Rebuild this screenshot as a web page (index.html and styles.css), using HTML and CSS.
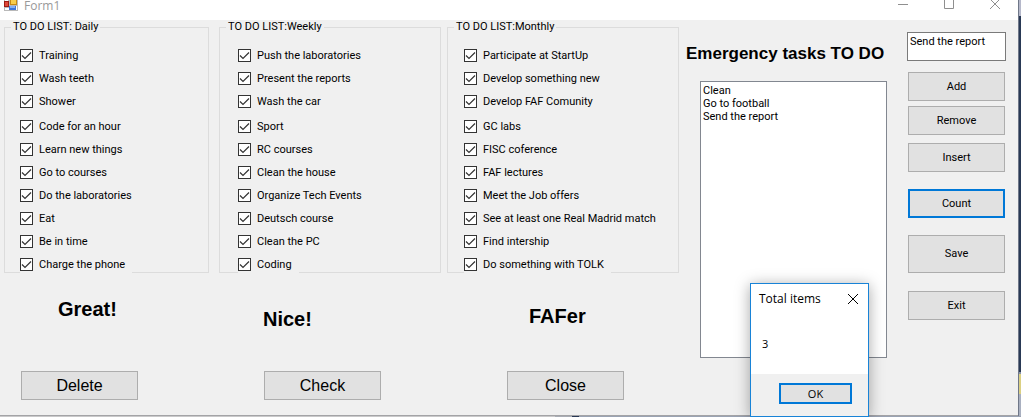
FILE: index.html
```
<!DOCTYPE html>
<html lang="en">
<head>
<meta charset="utf-8">
<title>Form1</title>
<link rel="stylesheet" href="styles.css">
</head>
<body>
<div class="desktop">
<div class="window">
  <header class="titlebar">
    <svg class="app-icon" width="14" height="11" viewBox="0 0 14 11" aria-hidden="true">
      <path d="M0 0h14v11H0z" fill="#b9b9b9"/>
      <path d="M1 0h3v1H1zM1 8h4v2H1zM12 6h1v4h-1z" fill="#fff"/>
      <path d="M0 1h5v6H0z" fill="#9c1c14"/>
      <path d="M1 2h3v4H1z" fill="#e0483a"/>
      <path d="M6 0h7v5H6z" fill="#c98a10"/>
      <path d="M7 0h5v4H7z" fill="#f8cd4a"/>
      <path d="M5 6h7v4H5z" fill="#3d76d8"/>
      <path d="M6 6h5v2H6z" fill="#86b0f4"/>
    </svg>
    <span class="title">Form1</span>
    <div class="controls">
      <button class="control" type="button" aria-label="Minimize"><svg width="10" height="10" viewBox="0 0 10 10"><path d="M0 4.5h10"/></svg></button>
      <button class="control" type="button" aria-label="Maximize"><svg width="10" height="10" viewBox="0 0 10 10"><path d="M.5-.5h9v9h-9z"/></svg></button>
      <button class="control" type="button" aria-label="Close window"><svg width="10" height="10" viewBox="0 0 10 10"><path d="M0-1l10 10M10-1L0 9"/></svg></button>
    </div>
  </header>

  <main class="form">
    <section class="column daily">
      <fieldset class="group">
        <legend>TO DO LIST: Daily</legend>
        <div class="tasks">
          <label><input type="checkbox" checked>Training</label>
          <label><input type="checkbox" checked>Wash teeth</label>
          <label><input type="checkbox" checked>Shower</label>
          <label class="next-part"><input type="checkbox" checked>Code for an hour</label>
          <label><input type="checkbox" checked>Learn new things</label>
          <label><input type="checkbox" checked>Go to courses</label>
          <label><input type="checkbox" checked>Do the laboratories</label>
          <label><input type="checkbox" checked>Eat</label>
          <label><input type="checkbox" checked>Be in time</label>
          <label><input type="checkbox" checked>Charge the phone</label>
        </div>
      </fieldset>
      <p class="praise">Great!</p>
      <button class="btn large" type="button">Delete</button>
    </section>

    <section class="column weekly">
      <fieldset class="group">
        <legend>TO DO LIST:Weekly</legend>
        <div class="tasks">
          <label><input type="checkbox" checked>Push the laboratories</label>
          <label><input type="checkbox" checked>Present the reports</label>
          <label><input type="checkbox" checked>Wash the car</label>
          <label class="next-part"><input type="checkbox" checked>Sport</label>
          <label><input type="checkbox" checked>RC courses</label>
          <label><input type="checkbox" checked>Clean the house</label>
          <label><input type="checkbox" checked>Organize Tech Events</label>
          <label><input type="checkbox" checked>Deutsch course</label>
          <label><input type="checkbox" checked>Clean the PC</label>
          <label><input type="checkbox" checked>Coding</label>
        </div>
      </fieldset>
      <p class="praise">Nice!</p>
      <button class="btn large" type="button">Check</button>
    </section>

    <section class="column monthly">
      <fieldset class="group">
        <legend>TO DO LIST:Monthly</legend>
        <div class="tasks">
          <label><input type="checkbox" checked>Participate at StartUp</label>
          <label><input type="checkbox" checked>Develop something new</label>
          <label><input type="checkbox" checked>Develop FAF Comunity</label>
          <label class="next-part"><input type="checkbox" checked>GC labs</label>
          <label><input type="checkbox" checked>FISC coference</label>
          <label><input type="checkbox" checked>FAF lectures</label>
          <label><input type="checkbox" checked>Meet the Job offers</label>
          <label><input type="checkbox" checked>See at least one Real Madrid match</label>
          <label><input type="checkbox" checked>Find intership</label>
          <label><input type="checkbox" checked>Do something with TOLK</label>
        </div>
      </fieldset>
      <p class="praise">FAFer</p>
      <button class="btn large" type="button">Close</button>
    </section>

    <section class="column emergency">
      <label class="heading" for="emergency-list">Emergency tasks TO DO</label>
      <select class="listbox" id="emergency-list" size="20">
        <option>Clean</option>
        <option>Go to football</option>
        <option>Send the report</option>
      </select>
    </section>

    <section class="column actions">
      <textarea class="entry" aria-label="Task">Send the report</textarea>
      <button class="btn add" type="button">Add</button>
      <button class="btn remove" type="button">Remove</button>
      <button class="btn insert" type="button">Insert</button>
      <button class="btn count focused" type="button">Count</button>
      <button class="btn save" type="button">Save</button>
      <button class="btn exit" type="button">Exit</button>
    </section>
  </main>

  <div class="dialog" role="dialog" aria-labelledby="dialog-title">
    <header class="dialog-head">
      <span id="dialog-title">Total items</span>
      <button class="dialog-close" type="button" aria-label="Close dialog"><svg width="10" height="10" viewBox="0 0 10 10"><path d="M0 0l10 10M10 0L0 10"/></svg></button>
    </header>
    <p class="dialog-text">3</p>
    <footer class="dialog-foot"><button class="btn ok focused" type="button">OK</button></footer>
  </div>
</div>
<div class="backdrop-side"></div>
<div class="backdrop-bottom"></div>
</div>
</body>
</html>
```
FILE: styles.css
```
* { box-sizing: border-box; }

body {
  margin: 0;
  font: 11px/14px Roboto, "Liberation Sans", Arial, sans-serif;
  color: #000;
}

.desktop {
  display: grid;
  grid-template-columns: 1fr 3px;
  grid-template-rows: 1fr 1px;
  min-height: 100vh;
}

.window {
  position: relative;
  display: flex;
  flex-direction: column;
  background: #f0f0f0;
  border-bottom: 1px solid #a3a3a6;
}

.backdrop-side {
  background: linear-gradient(#b5b8ca 16px, #293955 16px 372px, #8a93a8 372px 374px, #dbd083 374px 394px, #a9b0c0 394px);
  border-left: 1px solid #6f7788;
}

.backdrop-bottom {
  grid-column: 1 / -1;
  background: linear-gradient(90deg, #c9c9ca 555px, #a9adb5 555px 572px, #293955 572px 579px, #9aa3b3 579px);
}

.titlebar {
  display: flex;
  align-items: flex-start;
  height: 20px;
  padding-left: 4px;
  background: #fff;
}

.title {
  margin-left: 6px;
  font: 12px/11px "Open Sans", "Noto Sans", sans-serif;
  color: #999;
}

.controls { display: flex; margin-left: auto; }

.control {
  display: flex;
  justify-content: center;
  width: 46px;
  height: 20px;
  padding: 0;
  border: 0;
  background: none;
}

svg path { vector-effect: non-scaling-stroke; }
.control svg, .dialog-close svg { fill: none; overflow: visible; }
.control svg { stroke: #8f8f8f; }
.dialog-close svg { stroke: #000; }

.form {
  display: flex;
  flex: 1;
  padding: 0 12px 15px 4px;
}

.column {
  display: flex;
  flex-direction: column;
  align-items: flex-start;
  min-width: 0;
}

.daily { flex: 205 1 0; margin-right: 10px; }
.weekly { flex: 222 1 0; margin-right: 6px; }
.monthly { flex: 232 1 0; margin-right: 7px; }
.emergency { flex: 201 1 0; margin-right: 20px; }
.actions { flex: 99 1 0; align-items: stretch; }

.group {
  align-self: stretch;
  min-width: 0;
  margin: 0;
  padding: 0 6px;
  border: 1px solid #dcdcdc;
}

.group legend { padding: 0 2px; }

.tasks {
  display: flex;
  flex-direction: column;
  align-items: flex-start;
  gap: 6px;
  margin-bottom: -1px;
  padding-top: 13px;
}

.daily .tasks { padding-left: 9px; }
.weekly .tasks { padding-left: 12px; }
.monthly .tasks { padding-left: 10px; }

.tasks label {
  display: flex;
  align-items: center;
  gap: 6px;
  height: 17px;
  padding-right: 7px;
  background: #f0f0f0;
  line-height: 15px;
  white-space: nowrap;
}

.tasks .next-part { margin-top: 2px; }

.tasks input {
  appearance: none;
  width: 13px;
  height: 13px;
  margin: 0;
  border: 1px solid #333;
  background: #fff;
}

.tasks input:checked {
  background: #fff url("data:image/svg+xml,%3Csvg xmlns='http://www.w3.org/2000/svg' viewBox='0 0 11 11'%3E%3Cpath d='M1 5.5l3 3 6-6' fill='none' stroke='%23333' stroke-width='1.2'/%3E%3C/svg%3E");
}

.praise {
  margin: 0;
  font: bold 20px/24px "Liberation Sans", Arial, sans-serif;
}

.daily .praise { margin: 24px 0 0 54px; }
.weekly .praise { margin: 34px 0 0 44px; }
.monthly .praise { margin: 31px 0 0 82px; }

.btn {
  height: 29px;
  padding: 0;
  border: 1px solid #adadad;
  background: #e1e1e1;
  color: #000;
  font: inherit;
}

.btn.focused { border: 2px solid #0078d7; }

.btn.large {
  width: 117px;
  margin-top: auto;
  font: 16px "Liberation Sans", Arial, sans-serif;
}

.daily .large { margin-left: 17px; }
.weekly .large { margin-left: 45px; }
.monthly .large { margin-left: 60px; }

.heading {
  margin-top: 24px;
  font: bold 17px/20px "Liberation Sans", Arial, sans-serif;
  white-space: nowrap;
}

.listbox {
  align-self: stretch;
  height: 277px;
  margin: 17px 0 0 14px;
  padding: 2px 0;
  overflow-y: auto;
  border: 1px solid #828790;
  border-radius: 0;
  background: #fff;
  color: #000;
  font: inherit;
}

.listbox option {
  min-height: 13px;
  padding: 0 2px;
  line-height: 13px;
}

.entry {
  height: 29px;
  margin-top: 12px;
  padding: 2px;
  border: 1px solid #7a7a7a;
  color: #000;
  font: inherit;
  resize: none;
  overflow: hidden;
}

.actions .btn { margin: 0 1px; }
.actions .add { margin-top: 11px; }
.actions .remove { margin-top: 5px; }
.actions .insert { margin-top: 8px; }
.actions .count { margin-top: 17px; }
.actions .save { height: 38px; margin-top: 17px; }
.actions .exit { margin-top: 18px; }

/* Message box floating over the form */
.dialog {
  position: absolute;
  right: 149px;
  bottom: -2px;
  width: 119px;
  border: 1px solid #1883d7;
  background: #fff;
  box-shadow: 0 2px 14px rgba(0, 0, 0, 0.35);
  font: 12px/16px "Open Sans", "Noto Sans", sans-serif;
}

.dialog-head {
  display: flex;
  align-items: center;
  justify-content: space-between;
  height: 30px;
  padding: 0 10px 0 8px;
}

.dialog-close {
  display: flex;
  padding: 0;
  border: 0;
  background: none;
}

.dialog-text { margin: 0; padding: 22px 11px; font-size: 11px; }

.dialog-foot {
  display: flex;
  justify-content: flex-end;
  padding: 9px 16px 12px;
  background: #f0f0f0;
}

.dialog .ok { width: 73px; height: 21px; font-size: 11px; }
```
